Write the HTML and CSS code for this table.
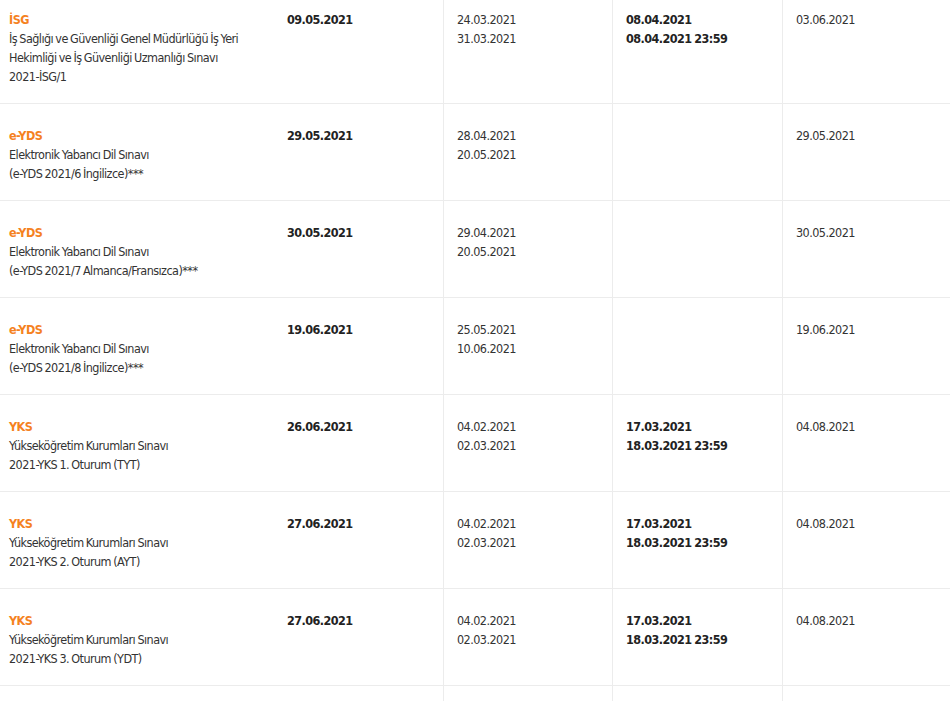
FILE: index.html
```html
<!DOCTYPE html>
<html lang="tr">
<head>
<meta charset="utf-8">
<link rel="stylesheet" href="styles.css">
</head>
<body>
<div class="table">
  <div class="row">
    <div class="cell name"><span class="code">İSG</span><br>İş Sağlığı ve Güvenliği Genel Müdürlüğü İş Yeri<br>Hekimliği ve İş Güvenliği Uzmanlığı Sınavı<br>2021-İSG/1</div>
    <div class="cell b">09.05.2021</div>
    <div class="cell sep">24.03.2021<br>31.03.2021</div>
    <div class="cell sep b">08.04.2021<br>08.04.2021 23:59</div>
    <div class="cell sep">03.06.2021</div>
  </div>
  <div class="row">
    <div class="cell name"><span class="code">e-YDS</span><br>Elektronik Yabancı Dil Sınavı<br>(e-YDS 2021/6 İngilizce)***</div>
    <div class="cell b">29.05.2021</div>
    <div class="cell sep">28.04.2021<br>20.05.2021</div>
    <div class="cell sep b"></div>
    <div class="cell sep">29.05.2021</div>
  </div>
  <div class="row">
    <div class="cell name"><span class="code">e-YDS</span><br>Elektronik Yabancı Dil Sınavı<br>(e-YDS 2021/7 Almanca/Fransızca)***</div>
    <div class="cell b">30.05.2021</div>
    <div class="cell sep">29.04.2021<br>20.05.2021</div>
    <div class="cell sep b"></div>
    <div class="cell sep">30.05.2021</div>
  </div>
  <div class="row">
    <div class="cell name"><span class="code">e-YDS</span><br>Elektronik Yabancı Dil Sınavı<br>(e-YDS 2021/8 İngilizce)***</div>
    <div class="cell b">19.06.2021</div>
    <div class="cell sep">25.05.2021<br>10.06.2021</div>
    <div class="cell sep b"></div>
    <div class="cell sep">19.06.2021</div>
  </div>
  <div class="row">
    <div class="cell name"><span class="code">YKS</span><br>Yükseköğretim Kurumları Sınavı<br>2021-YKS 1. Oturum (TYT)</div>
    <div class="cell b">26.06.2021</div>
    <div class="cell sep">04.02.2021<br>02.03.2021</div>
    <div class="cell sep b">17.03.2021<br>18.03.2021 23:59</div>
    <div class="cell sep">04.08.2021</div>
  </div>
  <div class="row">
    <div class="cell name"><span class="code">YKS</span><br>Yükseköğretim Kurumları Sınavı<br>2021-YKS 2. Oturum (AYT)</div>
    <div class="cell b">27.06.2021</div>
    <div class="cell sep">04.02.2021<br>02.03.2021</div>
    <div class="cell sep b">17.03.2021<br>18.03.2021 23:59</div>
    <div class="cell sep">04.08.2021</div>
  </div>
  <div class="row">
    <div class="cell name"><span class="code">YKS</span><br>Yükseköğretim Kurumları Sınavı<br>2021-YKS 3. Oturum (YDT)</div>
    <div class="cell b">27.06.2021</div>
    <div class="cell sep">04.02.2021<br>02.03.2021</div>
    <div class="cell sep b">17.03.2021<br>18.03.2021 23:59</div>
    <div class="cell sep">04.08.2021</div>
  </div>
  <div class="row">
    <div class="cell name">&nbsp;<br>&nbsp;<br>&nbsp;</div>
    <div class="cell b"></div>
    <div class="cell sep"></div>
    <div class="cell sep b"></div>
    <div class="cell sep"></div>
  </div>
</div>
</body>
</html>
```

FILE: styles.css
```css
html, body {
  margin: 0;
  padding: 0;
  background: #ffffff;
  overflow: hidden;
}

.table {
  margin-top: -12px;
  width: 960px;
  font-family: "DejaVu Sans", sans-serif;
  font-stretch: condensed;
  font-size: 12.5px;
  letter-spacing: -0.55px;
  word-spacing: -0.8px;
  line-height: 19px;
  color: #333333;
}

.row {
  display: grid;
  grid-template-columns: 273px 170px 169px 170px 1fr;
  border-bottom: 1px solid #ececec;
}

.cell {
  padding: 22px 14px 17px 14px;
  white-space: nowrap;
}

.cell.name {
  padding-left: 9px;
}

.cell.sep {
  border-left: 1px solid #ececec;
  padding-left: 13px;
}

.b {
  font-weight: bold;
  color: #222222;
}

.code {
  font-weight: bold;
  color: #f5821f;
}
```
